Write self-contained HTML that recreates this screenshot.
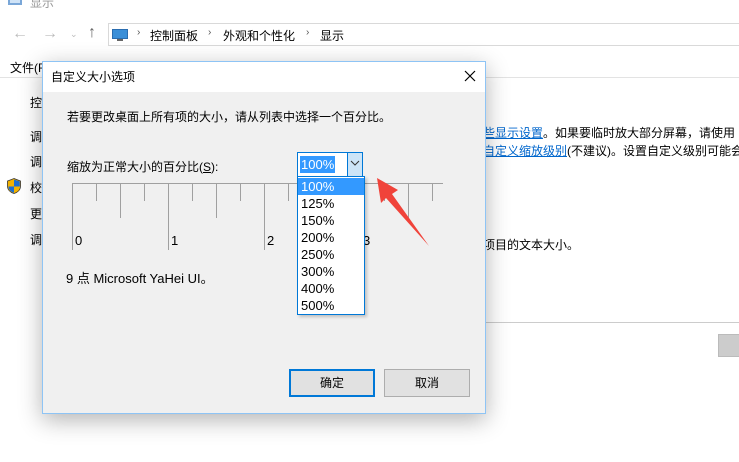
<!DOCTYPE html>
<html><head><meta charset="utf-8"><style>
*{margin:0;padding:0;box-sizing:border-box}
body{width:739px;height:462px;background:#fff;position:relative;overflow:hidden;font-family:"Liberation Sans","Noto Sans CJK SC",sans-serif;font-size:12px;color:#000}
.a{position:absolute;white-space:nowrap}
.li{height:17px;line-height:18px;padding-left:3px;font-size:13px}
</style></head><body>
<div class="a" style="left:8px;top:-6px;width:14px;height:11px;border:2px solid #7aa7d8;background:#cfe3f7"></div>
<div class="a" style="left:30px;top:-6px;color:#999;font-size:12px">显示</div>
<div class="a" style="left:12px;top:25px;color:#bbb;font-size:16px">←</div>
<div class="a" style="left:42px;top:25px;color:#bbb;font-size:16px">→</div>
<div class="a" style="left:70px;top:29px;color:#bbb;font-size:9px">⌄</div>
<div class="a" style="left:88px;top:24px;color:#666;font-size:16px">↑</div>
<div class="a" style="left:108px;top:23px;width:640px;height:23px;border:1px solid #d9d9d9"></div>
<div class="a" style="left:112px;top:29px;width:16px;height:10px;background:#3b8fd8;border:1px solid #2a6db0"></div>
<div class="a" style="left:117px;top:39px;width:6px;height:2px;background:#666"></div>
<div class="a" style="left:137px;top:27px;color:#555;font-size:10px">›</div>
<div class="a" style="left:150px;top:27px">控制面板</div>
<div class="a" style="left:208px;top:27px;color:#555;font-size:10px">›</div>
<div class="a" style="left:223px;top:27px">外观和个性化</div>
<div class="a" style="left:306px;top:27px;color:#555;font-size:10px">›</div>
<div class="a" style="left:320px;top:27px">显示</div>
<div class="a" style="left:10px;top:59px">文件(F</div>
<div class="a" style="left:0;top:77px;width:739px;height:1px;background:#e3e3e3"></div>
<div class="a" style="left:30px;top:94px">控</div>
<div class="a" style="left:30px;top:128px">调</div>
<div class="a" style="left:30px;top:153px">调</div>
<div class="a" style="left:30px;top:179px">校</div>
<svg class="a" style="left:7px;top:178px" width="14" height="16" viewBox="0 0 14 16"><path d="M7 0.5L13.5 3v5c0 4-3 6.5-6.5 7.5C3.5 14.5.5 12 .5 8V3z" fill="#f2b200" stroke="#333" stroke-width="0.8"/><path d="M7 1.5v7h5.8V3.5zM7 8.5v6.3C4 13.8 1.5 11.8 1.4 8.5z" fill="#1e6fd0"/></svg>
<div class="a" style="left:30px;top:205px">更</div>
<div class="a" style="left:30px;top:231px">调</div>
<div class="a" style="left:483px;top:124px"><span style="color:#0066cc;text-decoration:underline">些显示设置</span>。如果要临时放大部分屏幕，请使用</div>
<div class="a" style="left:483px;top:142px"><span style="color:#0066cc;text-decoration:underline">自定义缩放级别</span>(不建议)。设置自定义级别可能会</div>
<div class="a" style="left:483px;top:236px">项目的文本大小。</div>
<div class="a" style="left:485px;top:322px;width:254px;height:1px;background:#ccc"></div>
<div class="a" style="left:718px;top:334px;width:30px;height:23px;background:#ccc;border:1px solid #bbb"></div>

<div class="a" style="left:42px;top:61px;width:444px;height:353px;background:#f0f0f0;border:1px solid #8ec4f5;box-shadow:0 6px 22px rgba(0,0,0,0.3)">
 <div class="a" style="left:0;top:0;width:442px;height:30px;background:#fff"></div>
 <div class="a" style="left:8px;top:6px;font-size:12px">自定义大小选项</div>
 <svg class="a" style="left:421px;top:8px" width="12" height="12"><path d="M1 1L11 11M11 1L1 11" stroke="#000" stroke-width="1.2"/></svg>
 <div class="a" style="left:24px;top:46px">若要更改桌面上所有项的大小，请从列表中选择一个百分比。</div>
 <div class="a" style="left:24px;top:96px">缩放为正常大小的百分比(<u>S</u>):</div>
</div>
<svg class="a" style="left:0;top:0" width="739" height="462">
 <g stroke="#a0a0a0" stroke-width="1">
 <line x1="72" y1="183.5" x2="443" y2="183.5"/>
 <line x1="72.5" y1="183" x2="72.5" y2="250"/>
 <line x1="168.5" y1="183" x2="168.5" y2="250"/>
 <line x1="264.5" y1="183" x2="264.5" y2="250"/>
 <line x1="96.5" y1="183" x2="96.5" y2="201"/>
 <line x1="120.5" y1="183" x2="120.5" y2="218"/>
 <line x1="144.5" y1="183" x2="144.5" y2="201"/>
 <line x1="192.5" y1="183" x2="192.5" y2="201"/>
 <line x1="216.5" y1="183" x2="216.5" y2="218"/>
 <line x1="240.5" y1="183" x2="240.5" y2="201"/>
 <line x1="288.5" y1="183" x2="288.5" y2="201"/>
 <line x1="384.5" y1="183" x2="384.5" y2="201"/>
 <line x1="408.5" y1="183" x2="408.5" y2="218"/>
 <line x1="432.5" y1="183" x2="432.5" y2="201"/>
 </g>
 <path d="M377 178L398 190L392 194L429 246L386 198L381 203Z" fill="#f0433a"/>
</svg>
<div class="a" style="left:75px;top:233px;font-size:13px">0</div>
<div class="a" style="left:171px;top:233px;font-size:13px">1</div>
<div class="a" style="left:267px;top:233px;font-size:13px">2</div>
<div class="a" style="left:363px;top:233px;font-size:13px">3</div>
<div class="a" style="left:66px;top:268px;font-size:13px">9 点 Microsoft YaHei UI。</div>
<div class="a" style="left:297px;top:152px;width:66px;height:25px;background:#fff;border:1px solid #0078d7"></div>
<div class="a" style="left:300px;top:156px;height:17px;background:#3399ff;color:#fff;padding:0 1px;line-height:17px;font-size:13px">100%</div>
<div class="a" style="left:347px;top:153px;width:15px;height:23px;background:#cce4f7;border-left:1px solid #0078d7"></div>
<svg class="a" style="left:350px;top:160px" width="10" height="6"><path d="M1 1L5 5L9 1" stroke="#333" fill="none"/></svg>
<div class="a" style="left:297px;top:176px;width:68px;height:139px;background:#fff;border:1px solid #0078d7;box-shadow:2px 2px 3px rgba(0,0,0,0.2);padding-top:1px">
 <div class="li" style="background:#3399ff;color:#fff">100%</div>
 <div class="li">125%</div>
 <div class="li">150%</div>
 <div class="li">200%</div>
 <div class="li">250%</div>
 <div class="li">300%</div>
 <div class="li">400%</div>
 <div class="li">500%</div>
</div>
<div class="a" style="left:289px;top:369px;width:86px;height:28px;background:#e1e1e1;border:2px solid #0078d7;text-align:center;line-height:24px">确定</div>
<div class="a" style="left:384px;top:369px;width:86px;height:28px;background:#e1e1e1;border:1px solid #adadad;text-align:center;line-height:26px">取消</div>
</body></html>
